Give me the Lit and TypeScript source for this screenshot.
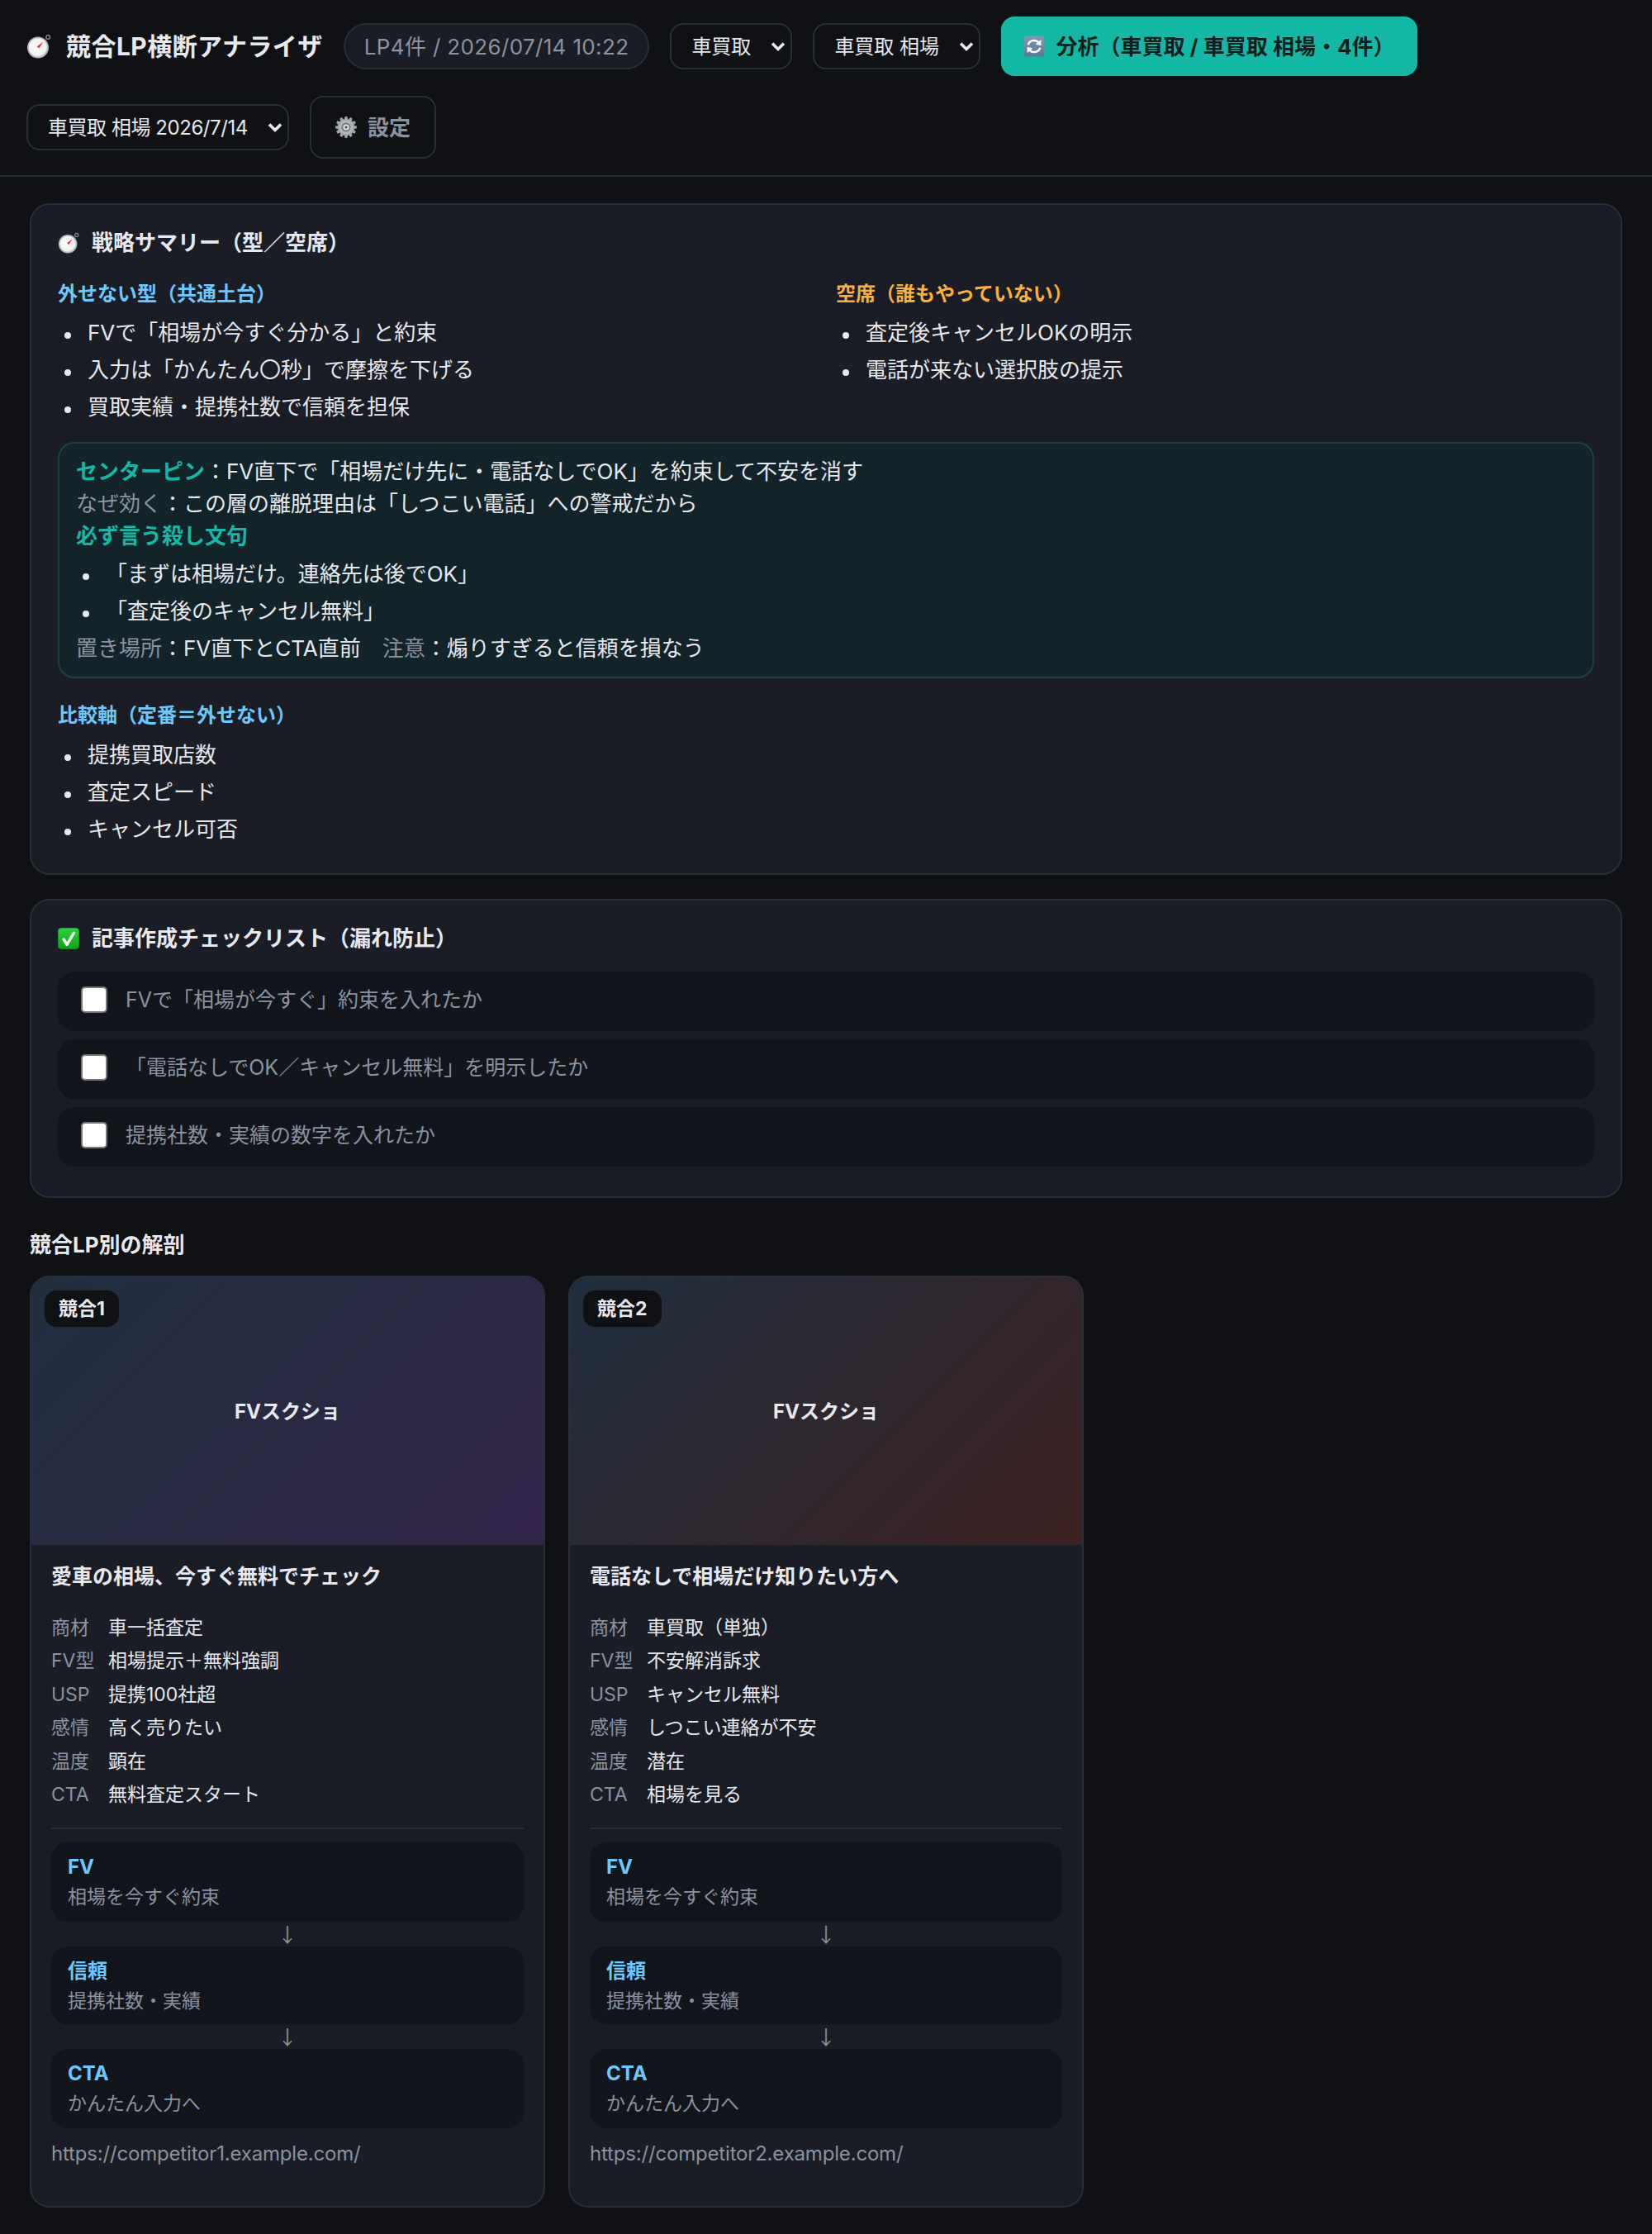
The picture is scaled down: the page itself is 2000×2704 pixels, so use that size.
import { LitElement, html, css } from "lit";
import { customElement } from "lit/decorators.js";

const compass = (size: number) => html`<svg class="emoji" width=${size} height=${size} viewBox="0 0 30 30" aria-hidden="true">
  <defs>
    <radialGradient id="cg" cx="45%" cy="45%" r="60%"><stop offset="0" stop-color="#ffffff"/><stop offset=".8" stop-color="#f0f0f0"/><stop offset="1" stop-color="#c4c4c4"/></radialGradient>
  </defs>
  <circle cx="26.2" cy="4" r="2.4" fill="none" stroke="#8f9296" stroke-width="1.3"/>
  <circle cx="14" cy="16.5" r="13" fill="#b4b6b8"/>
  <circle cx="14" cy="16.5" r="11.2" fill="url(#cg)"/>
  <polygon points="20.5,9.5 12.6,15.4 15.2,17.6" fill="#ee2a2a"/>
  <polygon points="7.5,23.5 12.6,15.4 15.2,17.6" fill="#ffffff"/>
</svg>`;

const gearPoints = (() => {
  const pts: string[] = [];
  const teeth = 12;
  for (let i = 0; i < teeth; i++) {
    const a = (i / teeth) * Math.PI * 2;
    const step = (Math.PI * 2) / teeth;
    [
      [a - step * 0.42, 10],
      [a - step * 0.2, 13],
      [a + step * 0.2, 13],
      [a + step * 0.42, 10],
    ].forEach(([t, r]) => pts.push(`${(13 + r * Math.sin(t)).toFixed(2)},${(13 - r * Math.cos(t)).toFixed(2)}`));
  }
  return pts.join(" ");
})();

const gear = (size: number) => html`<svg class="emoji" width=${size} height=${size} viewBox="0 0 26 26" aria-hidden="true">
  <polygon points=${gearPoints} fill="#a0a4a9"/>
  <circle cx="13" cy="13" r="8.6" fill="#b4b7bb"/>
  <circle cx="13" cy="13" r="5.6" fill="#74777c"/>
  <circle cx="13" cy="13" r="3.6" fill="#e6e7e9"/>
  <circle cx="13" cy="13" r="1.7" fill="#55585d"/>
</svg>`;

const refresh = (size: number) => html`<svg class="emoji" width=${size} height=${size} viewBox="0 0 26 26" aria-hidden="true">
  <defs><linearGradient id="rg" x1="0" y1="0" x2="0" y2="1"><stop offset="0" stop-color="#8399b5"/><stop offset="1" stop-color="#5d7692"/></linearGradient></defs>
  <rect x=".5" y=".5" width="25" height="25" rx="4" fill="url(#rg)"/>
  <path d="M5.6 11.2A7.8 7.8 0 0 1 18.4 8.2" fill="none" stroke="#fff" stroke-width="2.4"/>
  <polygon points="21.4,5 21.4,12.2 14.6,10.6" fill="#fff"/>
  <path d="M20.4 14.8A7.8 7.8 0 0 1 7.6 17.8" fill="none" stroke="#fff" stroke-width="2.4"/>
  <polygon points="4.6,21 4.6,13.8 11.4,15.4" fill="#fff"/>
</svg>`;

const check = (size: number) => html`<svg class="emoji" width=${size} height=${size} viewBox="0 0 26 26" aria-hidden="true">
  <defs><linearGradient id="kg" x1="0" y1="0" x2="0" y2="1"><stop offset="0" stop-color="#2ed33a"/><stop offset="1" stop-color="#0aa516"/></linearGradient></defs>
  <rect x=".3" y=".3" width="25.4" height="25.4" rx="4" fill="url(#kg)"/>
  <polygon points="5,13.6 7.8,12 11,17 18.6,4.6 21.6,5.8 12,22 10,22" fill="#fff"/>
</svg>`;

const chevron = html`<svg class="chev" width="18" height="12" viewBox="0 0 18 12" aria-hidden="true"><path d="M2 2.4 9 9.4 16 2.4" fill="none" stroke="#e7e9ee" stroke-width="3.6"/></svg>`;

interface Competitor {
  badge: string;
  title: string;
  rows: [string, string][];
  url: string;
  tone: string;
}

const competitors: Competitor[] = [
  {
    badge: "競合1",
    title: "愛車の相場、今すぐ無料でチェック",
    rows: [["商材", "車一括査定"], ["FV型", "相場提示＋無料強調"], ["USP", "提携100社超"], ["感情", "高く売りたい"], ["温度", "顕在"], ["CTA", "無料査定スタート"]],
    url: "https://competitor1.example.com/",
    tone: "one",
  },
  {
    badge: "競合2",
    title: "電話なしで相場だけ知りたい方へ",
    rows: [["商材", "車買取（単独）"], ["FV型", "不安解消訴求"], ["USP", "キャンセル無料"], ["感情", "しつこい連絡が不安"], ["温度", "潜在"], ["CTA", "相場を見る"]],
    url: "https://competitor2.example.com/",
    tone: "two",
  },
];

const flow = [
  ["FV", "相場を今すぐ約束"],
  ["信頼", "提携社数・実績"],
  ["CTA", "かんたん入力へ"],
];

@customElement("app-root")
export class AppRoot extends LitElement {
  static styles = css`
    :host {
      display: block;
      background: #0f1115;
      color: #e7e9ee;
      font-family: Inter, "Noto Sans CJK JP", sans-serif;
      font-size: 26px;
      line-height: 39px;
    }
    .emoji { flex: none; display: block; }
    header {
      display: flex;
      flex-wrap: wrap;
      align-items: center;
      gap: 24px 25px;
      padding: 20px 32px;
      border-bottom: 2px solid #2a2e38;
    }
    h1 {
      margin: 0;
      display: flex;
      align-items: center;
      gap: 18px;
      font-size: 30px;
      line-height: 45px;
      font-weight: 700;
      letter-spacing: 0.45px;
    }
    .pill {
      height: 56px;
      box-sizing: border-box;
      display: flex;
      align-items: center;
      padding: 0 23px;
      border: 2px solid #2a2e38;
      border-radius: 28px;
      background: #1a1d25;
      color: #8b93a1;
      letter-spacing: 0.35px;
    }
    .select { position: relative; display: block; flex: none; }
    select {
      appearance: none;
      display: block;
      height: 56px;
      padding: 0 48px 0 24px;
      border: 2px solid #2a2e38;
      border-radius: 16px;
      background: #0f1115;
      color: #e7e9ee;
      font: inherit;
      font-size: 24px;
    }
    select.narrow { letter-spacing: -0.45px; }
    .chev { position: absolute; right: 8px; top: 22px; pointer-events: none; }
    button {
      display: flex;
      align-items: center;
      gap: 13px;
      font: inherit;
      font-weight: 700;
      border-radius: 16px;
    }
    .run {
      height: 72px;
      padding: 0 27px;
      border: 0;
      background: #14b8a6;
      color: #0b1f1c;
    }
    .settings {
      height: 76px;
      padding: 0 29px;
      border: 2px solid #2a2e38;
      background: transparent;
      color: #8b93a1;
    }
    main { padding: 32px 36px; }
    .card {
      border: 2px solid #2a2e38;
      border-radius: 24px;
      background: #1a1d25;
      padding: 26px 32px 28px;
    }
    .card + .card { margin-top: 29px; padding-bottom: 36px; }
    h2 {
      margin: 0;
      display: flex;
      align-items: center;
      gap: 15px;
      font-size: 26px;
      line-height: 39px;
      font-weight: 700;
    }
    .cols {
      display: grid;
      grid-template-columns: 1fr 1fr;
      gap: 24px;
      margin-top: 25px;
    }
    .label { font-size: 24px; line-height: 36px; font-weight: 700; color: #6cc9ff; }
    .label.warn { color: #fbb13c; }
    ul { margin: 10px 0 0; padding: 0 0 0 36px; list-style: none; }
    .cols ul { margin-top: 9px; }
    li { position: relative; margin-bottom: 6px; }
    li::before {
      content: "";
      position: absolute;
      left: -28px;
      top: 19px;
      width: 8px;
      height: 8px;
      border-radius: 50%;
      background: currentColor;
    }
    .callout {
      margin-top: 17px;
      border: 2px solid #1c4043;
      border-radius: 20px;
      background: #13232a;
      padding: 14px 20px 15px;
      font-size: 26px;
    }
    .callout ul { margin: 7px 0 4px; }
    .teal { color: #14b8a6; font-weight: 700; }
    .dim { color: #8b93a1; }
    .axes { margin-top: 27px; }
    .checks { display: flex; flex-direction: column; gap: 10px; margin-top: 21px; }
    .check-row {
      display: flex;
      align-items: center;
      gap: 22px;
      box-sizing: border-box;
      height: 72px;
      padding: 0 28px 4px;
      border-radius: 20px;
      background: #12151c;
      color: #8b93a1;
      font-size: 25px;
    }
    input[type="checkbox"] {
      appearance: none;
      flex: none;
      width: 32px;
      height: 32px;
      margin: 0;
      box-sizing: border-box;
      background: #fff;
      border: 2px solid #767676;
      border-radius: 5px;
    }
    h3 {
      margin: 37px 0 18px;
      font-size: 26px;
      line-height: 39px;
      font-weight: 700;
    }
    .grid {
      display: grid;
      grid-template-columns: repeat(3, 1fr);
      gap: 28px;
      align-items: start;
    }
    .lp {
      border: 2px solid #2a2e38;
      border-radius: 24px;
      background: #1a1d25;
      overflow: hidden;
    }
    .fv {
      position: relative;
      height: 324px;
      display: flex;
      align-items: center;
      justify-content: center;
      font-size: 24px;
      font-weight: 700;
    }
    .fv.one { background: linear-gradient(135deg, #1f2e3f, #33254a); }
    .fv.two { background: linear-gradient(135deg, #1f2e3f, #3d2020); }
    .badge {
      position: absolute;
      left: 16px;
      top: 16px;
      padding: 6px 17px;
      border-radius: 14px;
      background: #0f1115;
      font-size: 23px;
      line-height: 32px;
    }
    .body { padding: 19px 24px 45px; }
    .title { font-size: 25px; line-height: 39px; font-weight: 700; }
    dl {
      display: grid;
      grid-template-columns: 57px 1fr;
      column-gap: 12px;
      row-gap: 2px;
      margin: 23px 0 0;
      font-size: 23px;
      line-height: 38.4px;
    }
    dt { color: #8b93a1; }
    dd { margin: 0; }
    hr { border: 0; height: 2px; background: #2a2e38; margin: 21px 0 16px; }
    .step {
      padding: 12px 20px;
      border-radius: 20px;
      background: #12151c;
    }
    .step.tight { padding-bottom: 10px; }
    .step b { display: block; font-size: 24px; line-height: 36px; color: #6cc9ff; }
    .step span { display: block; font-size: 23px; line-height: 36px; color: #8b93a1; }
    .arrow {
      height: 30px;
      line-height: 30px;
      text-align: center;
      font-family: "Noto Sans CJK JP", sans-serif;
      font-size: 24px;
      color: #8b93a1;
    }
    .url { margin-top: 13px; font-size: 24px; line-height: 36px; color: #8b93a1; letter-spacing: -0.18px; }
  `;

  render() {
    return html`
      <header>
        <h1>${compass(30)}競合LP横断アナライザ</h1>
        <div class="pill">LP4件 / 2026/07/14 10:22</div>
        <label class="select"><select><option>車買取</option></select>${chevron}</label>
        <label class="select"><select><option>車買取 相場</option></select>${chevron}</label>
        <button class="run">${refresh(26)}分析（車買取 / 車買取 相場・4件）</button>
        <label class="select"><select class="narrow"><option>車買取 相場 2026/7/14</option></select>${chevron}</label>
        <button class="settings">${gear(26)}設定</button>
      </header>
      <main>
        <section class="card">
          <h2>${compass(26)}戦略サマリー（型／空席）</h2>
          <div class="cols">
            <div>
              <div class="label">外せない型（共通土台）</div>
              <ul>
                <li>FVで「相場が今すぐ分かる」と約束</li>
                <li>入力は「かんたん〇秒」で摩擦を下げる</li>
                <li>買取実績・提携社数で信頼を担保</li>
              </ul>
            </div>
            <div>
              <div class="label warn">空席（誰もやっていない）</div>
              <ul>
                <li>査定後キャンセルOKの明示</li>
                <li>電話が来ない選択肢の提示</li>
              </ul>
            </div>
          </div>
          <div class="callout">
            <div><span class="teal">センターピン</span>：FV直下で「相場だけ先に・電話なしでOK」を約束して不安を消す</div>
            <div><span class="dim">なぜ効く</span>：この層の離脱理由は「しつこい電話」への警戒だから</div>
            <div class="teal">必ず言う殺し文句</div>
            <ul>
              <li>「まずは相場だけ。連絡先は後でOK」</li>
              <li>「査定後のキャンセル無料」</li>
            </ul>
            <div><span class="dim">置き場所</span>：FV直下とCTA直前　<span class="dim">注意</span>：煽りすぎると信頼を損なう</div>
          </div>
          <div class="axes">
            <div class="label">比較軸（定番＝外せない）</div>
            <ul>
              <li>提携買取店数</li>
              <li>査定スピード</li>
              <li>キャンセル可否</li>
            </ul>
          </div>
        </section>
        <section class="card">
          <h2>${check(26)}記事作成チェックリスト（漏れ防止）</h2>
          <div class="checks">
            <label class="check-row"><input type="checkbox" />FVで「相場が今すぐ」約束を入れたか</label>
            <label class="check-row"><input type="checkbox" />「電話なしでOK／キャンセル無料」を明示したか</label>
            <label class="check-row"><input type="checkbox" />提携社数・実績の数字を入れたか</label>
          </div>
        </section>
        <h3>競合LP別の解剖</h3>
        <div class="grid">
          ${competitors.map(
            (c) => html`<article class="lp">
              <div class="fv ${c.tone}"><span class="badge">${c.badge}</span>FVスクショ</div>
              <div class="body">
                <div class="title">${c.title}</div>
                <dl>${c.rows.map(([k, v]) => html`<dt>${k}</dt><dd>${v}</dd>`)}</dl>
                <hr />
                ${flow.map(
                  ([k, v], i) => html`${i > 0 ? html`<div class="arrow">↓</div>` : ""}<div class="step ${i === 1 ? "tight" : ""}"><b>${k}</b><span>${v}</span></div>`
                )}
                <div class="url">${c.url}</div>
              </div>
            </article>`
          )}
        </div>
      </main>
    `;
  }
}
